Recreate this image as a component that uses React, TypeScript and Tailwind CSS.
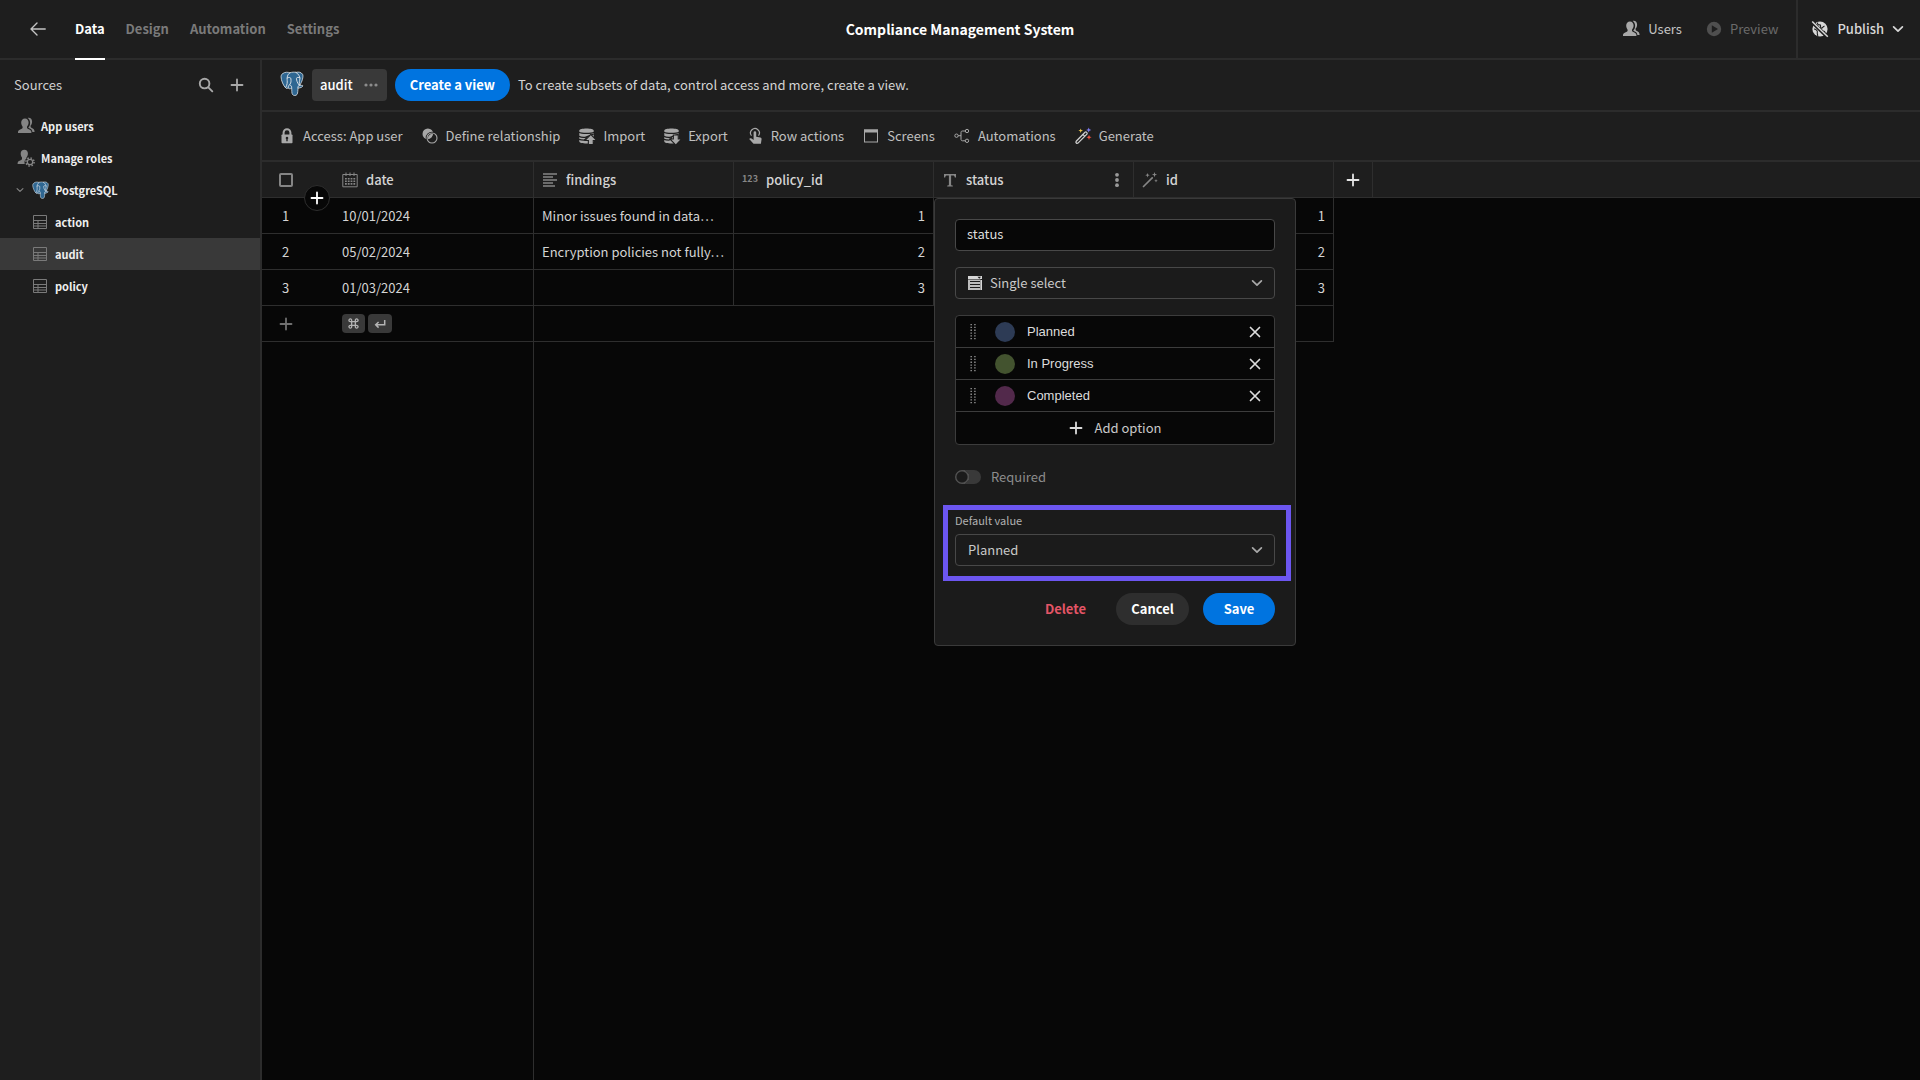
import React from "react";

type IconProps = { className?: string };
type IconType = (p: IconProps) => React.ReactElement;

const UsersIcon: IconType = ({ className = "" }) => (
  <svg viewBox="0 0 18 18" className={`size-[18px] shrink-0 ${className}`} fill="currentColor" aria-hidden="true">
    <path d="M8 1.6c2.3 0 3.6 1.7 3.6 4 0 1.700-.7 3.200-1.600 4.100v1.100c0 .5.3.8.8 1 2.400.9 3.600 1.800 3.600 3.300V16H1v-.9c0-1.500 1.300-2.400 3.800-3.300.5-.2.8-.5.8-1V9.700C4.800 8.800 4.200 7.300 4.200 5.600c0-2.300 1.400-4 3.800-4Z" />
    <path d="M10.600.9c2.600-.6 4.500 1.100 4.500 3.800 0 1.700-.7 3-1.500 3.900v1c0 .5.2.8.8 1.100 2.100.9 3.200 1.900 3.200 4.300h-2.200c-.1-2-1.300-3.100-3.600-4l-.5-.6c1.300-1.200 1.800-2.700 1.800-4.700 0-2.200-.9-3.900-2.500-4.800Z" />
  </svg>
);

const RolesIcon: IconType = ({ className = "" }) => (
  <svg viewBox="0 0 18 18" className={`size-[18px] shrink-0 ${className}`} fill="currentColor" aria-hidden="true">
    <path d="M7.400.8c2.200 0 3.500 1.600 3.500 3.800 0 1.600-.6 3-1.500 3.900v1c-1.200 1-1.900 2.300-1.900 3.800 0 .6.100 1.200.3 1.700H.6v-.8c0-1.500 1.200-2.400 3.600-3.200.6-.2.800-.5.800-1V8.500C4.200 7.600 3.700 6.200 3.700 4.600 3.700 2.400 5.100.8 7.400.8Z" />
    <circle cx="13" cy="13" r="2.700" fill="none" stroke="currentColor" strokeWidth="1.300" />
    <circle cx="13" cy="13" r="4.100" fill="none" stroke="currentColor" strokeWidth="1.500" strokeDasharray="1.500 1.720" />
  </svg>
);

const Postgres: IconType = ({ className = "" }) => (
  <svg viewBox="0 0 24 25" className={`shrink-0 ${className}`} aria-hidden="true">
    <path
      d="M2.600 2.600C5 .8 8 1 10 1.800 12 .9 14.500 1 16 1.400 18.500.6 21.300 1.200 22.600 3.300c1.200 2.200-.6 7.700-2.800 10.900 1 .5 2.800-.2 3 .4.3 1.300-2.400 2.600-4.700 2.400-.3 2.500-.2 5-1 6.400-.9 1.400-3.600 1.500-4.600.1-1-1.400-.6-4.200-.8-6.200-1.200.7-3.100.7-3.600-.3-.7.500-1.500.8-2.300.1C3.500 15 1 9.300 1 5.800c0-1.300.600-2.500 1.600-3.200Z"
      fill="#2f6792"
      stroke="#101010"
      strokeWidth="1.600"
    />
    <path
      d="M2.600 2.600C5 .8 8 1 10 1.800 12 .9 14.500 1 16 1.400 18.500.6 21.300 1.200 22.600 3.300c1.200 2.200-.6 7.700-2.800 10.900 1 .5 2.800-.2 3 .4.3 1.300-2.400 2.600-4.700 2.400-.3 2.500-.2 5-1 6.400-.9 1.400-3.600 1.500-4.600.1-1-1.400-.6-4.200-.8-6.200-1.200.7-3.100.7-3.600-.3-.7.500-1.500.8-2.300.1C3.500 15 1 9.300 1 5.800c0-1.300.600-2.500 1.600-3.200Z"
      fill="#2f6792"
      stroke="#e3e8ec"
      strokeWidth=".8"
    />
    <g fill="none" stroke="#e3e8ec" strokeWidth=".9" strokeLinecap="round" strokeLinejoin="round">
      <path d="M10 1.800C7.200 3.300 7 6.500 7.200 9.500c.1 2 .200 3.700-1.400 6.800" />
      <path d="M7.200 7c1.500-1 3.600-.7 3.700.8.200 2.200.2 4-.8 5.200-1 1.200-2 2.200-2 3.600" />
      <path d="M16 1.400c2.500 1.400 4 4.300 3.900 6.300-.1 2.100-1.400 3.700-.1 6.500" />
      <path d="M19.900 6.800c-1.400-.7-3.300-.5-3.400.5-.1 2.300 1 4.500 2.200 6.300" />
      <path d="M11.700 17c0-1.500-.4-2.500-1.500-3" />
      <path d="M17.900 17c-.3-1.500.2-2.300 1.900-2.800" />
    </g>
  </svg>
);

const TableIcon: IconType = ({ className = "" }) => (
  <svg viewBox="0 0 16 16" className={`size-4 shrink-0 ${className}`} fill="none" stroke="currentColor" aria-hidden="true">
    <path d="M1.500 1.500h13v13h-13zM1.500 6.500h13M1.500 9.500h13M1.500 12h13M6 6.500v8" />
  </svg>
);

const Chevron: IconType = ({ className = "" }) => (
  <svg viewBox="0 0 12 12" className={`shrink-0 ${className}`} fill="none" stroke="currentColor" strokeWidth="1.700" strokeLinecap="round" strokeLinejoin="round" aria-hidden="true">
    <path d="M1.600 3.800 6 8.200l4.400-4.400" />
  </svg>
);

const Plus: IconType = ({ className = "" }) => (
  <svg viewBox="0 0 14 14" className={`size-[14px] shrink-0 ${className}`} fill="none" stroke="currentColor" strokeWidth="1.800" strokeLinecap="round" aria-hidden="true">
    <path d="M7 1.500v11M1.500 7h11" />
  </svg>
);

const Search: IconType = ({ className = "" }) => (
  <svg viewBox="0 0 16 16" className={`size-4 shrink-0 ${className}`} fill="none" stroke="currentColor" strokeWidth="1.900" strokeLinecap="round" aria-hidden="true">
    <circle cx="6.600" cy="6.600" r="4.800" />
    <path d="m10.300 10.300 4 4" />
  </svg>
);

const BackArrow: IconType = ({ className = "" }) => (
  <svg viewBox="0 0 16 16" className={`size-4 shrink-0 ${className}`} fill="none" stroke="currentColor" strokeWidth="1.400" strokeLinecap="round" strokeLinejoin="round" aria-hidden="true">
    <path d="M15.200 8H1.200M7 2 1 8l6 6" />
  </svg>
);

const Play: IconType = ({ className = "" }) => (
  <svg viewBox="0 0 16 16" className={`size-4 shrink-0 ${className}`} aria-hidden="true">
    <circle cx="8" cy="8" r="7.200" fill="currentColor" />
    <path d="M5.800 4.200v7.600L12 8Z" fill="#1e1e1e" />
  </svg>
);

const GlobeOff: IconType = ({ className = "" }) => (
  <svg viewBox="0 0 18 18" className={`size-[18px] shrink-0 ${className}`} aria-hidden="true">
    <circle cx="9" cy="9" r="7.600" fill="currentColor" />
    <path d="M6.800 2.500c-1 2 .8 2.600 2.400 2.300 1 .9-.3 2.200.8 3.200 1.500 1 1.800-2 3.600-1.700M3 9c1.800 0 3.800 1.700 3.300 3.300-.3 1.300.5 2.500.4 3.700M12.500 11c1.300.2 1.800 1.500 1.300 3" fill="none" stroke="#1e1e1e" strokeWidth="1.100" />
    <path d="m1 2 15.500 15" stroke="#1e1e1e" strokeWidth="3.600" />
    <path d="m1.200 1.500 15.600 15.300" stroke="currentColor" strokeWidth="1.500" />
  </svg>
);

const Lock: IconType = ({ className = "" }) => (
  <svg viewBox="0 0 18 18" className={`size-[18px] shrink-0 ${className}`} aria-hidden="true">
    <path d="M5.600 8.500V5.600a3.400 3.400 0 0 1 6.800 0v2.900" fill="none" stroke="currentColor" strokeWidth="2" />
    <rect x="3.500" y="7.500" width="11" height="8.800" rx=".8" fill="currentColor" />
    <path d="M9 9.700a1.300 1.300 0 0 1 .7 2.400v2.100H8.300v-2.100A1.300 1.300 0 0 1 9 9.700Z" fill="#1e1e1e" />
  </svg>
);

const Relationship: IconType = ({ className = "" }) => (
  <svg viewBox="0 0 18 18" className={`size-[18px] shrink-0 ${className}`} aria-hidden="true">
    <circle cx="6.900" cy="6.900" r="5.400" fill="currentColor" />
    <circle cx="11" cy="11" r="5" fill="#1e1e1e" stroke="#1e1e1e" strokeWidth="2.600" />
    <circle cx="11" cy="11" r="5" fill="none" stroke="currentColor" strokeWidth="1.100" />
    <path d="M11.600 7.200a5.400 5.400 0 0 1-4.400 4.600 4.500 4.500 0 0 1 4.400-4.600Z" fill="currentColor" stroke="currentColor" />
  </svg>
);

const DataStack = ({ up }: { up: boolean }) => (
  <svg viewBox="0 0 18 18" className="size-[18px] shrink-0" fill="currentColor" aria-hidden="true">
    <path d="M1.300 3.400C1.300 2.100 4.500 1.400 8.500 1.400s7.200.7 7.200 2v11c0 1.200-3.200 2-7.200 2s-7.200-.8-7.200-2Z" />
    <path d="M1 5.200c2.500 1.500 12.500 1.500 15 0M1 9.300c2 1.300 4 1.300 6.200 1L15.800 7M1 12.300c1.500.7 3 .8 5 .8l3-2.400" fill="none" stroke="#1e1e1e" strokeWidth="1.200" />
    <path
      d={up ? "M12.800 8.300 17.400 13h-2.700v4h-3.800v-4H8.200Z" : "m12.800 17.200 4.600-4.700h-2.700v-4h-3.800v4H8.200Z"}
      stroke="#1e1e1e"
      strokeWidth="2.200"
    />
    <path d={up ? "M12.800 8.300 17.400 13h-2.700v4h-3.800v-4H8.200Z" : "m12.800 17.200 4.600-4.700h-2.700v-4h-3.800v4H8.200Z"} />
  </svg>
);
const ImportIcon: IconType = () => <DataStack up />;
const ExportIcon: IconType = () => <DataStack up={false} />;

const Tap: IconType = ({ className = "" }) => (
  <svg viewBox="0 0 18 18" className={`size-[18px] shrink-0 ${className}`} aria-hidden="true">
    <path d="M5.500 8.700A4.400 4.400 0 1 1 12.500 8.600" fill="none" stroke="currentColor" strokeWidth="1.200" />
    <path d="M7.600 5.500a1.300 1.300 0 0 1 2.600 0v4.200l4.200.8c.8.2 1.200.7 1.200 1.500l-.7 4.800H7.500L3.200 12c.5-.9 1.500-1 2.300-.4l2.100 1.300Z" fill="currentColor" />
  </svg>
);

const Screens: IconType = ({ className = "" }) => (
  <svg viewBox="0 0 18 18" className={`size-[18px] shrink-0 ${className}`} aria-hidden="true">
    <rect x="2.500" y="3" width="13" height="12" fill="none" stroke="currentColor" />
    <rect x="2" y="2.500" width="14" height="3" fill="currentColor" />
  </svg>
);

const Flow: IconType = ({ className = "" }) => (
  <svg viewBox="0 0 18 18" className={`size-[18px] shrink-0 ${className}`} fill="none" stroke="currentColor" aria-hidden="true">
    <circle cx="3.500" cy="8.700" r="1.700" />
    <circle cx="14" cy="4" r="1.700" />
    <circle cx="14" cy="13.800" r="1.700" />
    <path d="M5.200 8.700H8M12.300 4H9.500C8.500 4 8 4.500 8 5.500v6.800c0 1 .5 1.500 1.500 1.500h2.800" />
  </svg>
);

const MagicWand: IconType = ({ className = "" }) => (
  <svg viewBox="0 0 18 18" className={`size-[18px] shrink-0 ${className}`} aria-hidden="true">
    <path d="m2.200 14.300 8.800-9.100c1.200-.8 2.700.7 1.900 1.900l-8.900 9c-1.200.9-2.700-.6-1.800-1.800Z" fill="none" stroke="#cfcfcf" strokeWidth="1.300" />
    <path d="m8.800 7.300 2 2" stroke="#cfcfcf" strokeWidth="1.200" />
    <path d="M6.700 1.400 7.300 3l1.700.6-1.700.6-.6 1.700-.6-1.700-1.700-.6L6.100 3Z" fill="#f0c94a" />
    <path d="m14.700.4.700 1.900 1.900.7-1.900.7-.7 1.900-.7-1.900-1.900-.7 1.900-.7Z" fill="#7f7cf0" />
    <path d="m15 7.700.7 1.900 1.900.7-1.900.7L15 12.900l-.7-1.900-1.900-.7 1.900-.7Z" fill="#f0523f" />
  </svg>
);

const CalendarIcon: IconType = () => (
  <svg viewBox="0 0 16 16" className="size-4 shrink-0" fill="none" stroke="currentColor" aria-hidden="true">
    <path d="M.8 2.500h14.400v12.300H.8zM4 .5v3.500M8 .5v3.500M12 .5v3.500" />
    <path d="M3 6.700h10.500M3 9.300h10.500M3 11.900h10.500" strokeWidth="1.600" strokeDasharray="1.800 1" />
  </svg>
);

const LinesIcon: IconType = () => (
  <svg viewBox="0 0 16 16" className="size-4 shrink-0" fill="none" stroke="currentColor" strokeWidth="1.300" aria-hidden="true">
    <path d="M1 2h14M1 5h10M1 8h14M1 11h10M1 14h12" />
  </svg>
);

const NumberIcon: IconType = () => <span aria-hidden="true" className="-mt-px w-4 text-center text-[9px] font-bold leading-4">123</span>;

const TextIcon: IconType = () => (
  <svg viewBox="0 0 16 16" className="size-4 shrink-0" fill="currentColor" aria-hidden="true">
    <path d="M2 2h12v3.500h-1.200C12.600 4 12 3.600 11 3.600H9.100v9c0 .7.400.9 1.700 1v1H5.200v-1c1.300-.1 1.700-.3 1.700-1v-9H5c-1 0-1.600.4-1.800 1.900H2Z" />
  </svg>
);

const WandSmall: IconType = () => (
  <svg viewBox="0 0 16 16" className="size-4 shrink-0" aria-hidden="true">
    <path d="m1.500 14.500 8.700-8.700" stroke="currentColor" strokeWidth="1.700" strokeLinecap="round" />
    <path d="m5.500 1 .6 1.600 1.600.6-1.600.6-.6 1.600-.6-1.600-1.600-.6 1.600-.6ZM12.500 0l.7 1.900 1.900.7-1.900.7-.7 1.900-.7-1.900-1.900-.7 1.900-.7ZM14 7l.5 1.200 1.200.5-1.200.5L14 10.400l-.5-1.200-1.200-.5 1.200-.5Z" fill="currentColor" />
  </svg>
);

const SelectIcon: IconType = ({ className = "" }) => (
  <svg viewBox="0 0 16 16" className={`size-4 ${className}`} aria-hidden="true">
    <path d="M1 1h14v3H1z" fill="#d6d6d6" />
    <path d="M10.500 1.700h3.500l-1.700 2Z" fill="#1b1b1b" />
    <path d="M1 4.500h12.500V15H1z" fill="#bdbdbd" />
    <path d="M13.500 5H15v10h-1.500z" fill="#d6d6d6" />
    <path d="M3 6.500h10M3 9.500h10M3 12.500h10" stroke="#1b1b1b" />
  </svg>
);

const Grip: IconType = () => (
  <svg viewBox="0 0 6 16" className="h-4 w-[6px] shrink-0" stroke="#8c8c8c" strokeWidth="1.500" strokeDasharray="1.300 1.500" aria-hidden="true">
    <path d="M1.200 0v16M4.900 0v16" />
  </svg>
);

const Cross: IconType = () => (
  <svg viewBox="0 0 12 12" className="size-3" fill="none" stroke="currentColor" strokeWidth="1.700" strokeLinecap="round" aria-hidden="true">
    <path d="m1.500 1.500 9 9M10.500 1.500l-9 9" />
  </svg>
);

const tabs = ["Data", "Design", "Automation", "Settings"];

const tools: { label: string; Icon: IconType }[] = [
  { label: "Access: App user", Icon: Lock },
  { label: "Define relationship", Icon: Relationship },
  { label: "Import", Icon: ImportIcon },
  { label: "Export", Icon: ExportIcon },
  { label: "Row actions", Icon: Tap },
  { label: "Screens", Icon: Screens },
  { label: "Automations", Icon: Flow },
  { label: "Generate", Icon: MagicWand },
];

const rows = [
  { date: "10/01/2024", findings: "Minor issues found in data…", policy: 1, id: 1 },
  { date: "05/02/2024", findings: "Encryption policies not fully…", policy: 2, id: 2 },
  { date: "01/03/2024", findings: "", policy: 3, id: 3 },
];

const options = [
  { name: "Planned", color: "bg-[#2d3b55]" },
  { name: "In Progress", color: "bg-[#43532f]" },
  { name: "Completed", color: "bg-[#52294b]" },
];

function TopBar() {
  return (
    <header className="grid h-[60px] shrink-0 grid-cols-[1fr_auto_1fr] border-b-2 border-[#2c2c2c]">
      <div className="flex items-center pl-[30px]">
        <button aria-label="Back" className="mr-[29px] text-[#c4c4c4]"><BackArrow /></button>
        <nav className="-mb-[2px] flex gap-[21px] self-stretch">
          {tabs.map((t, i) => (
            <a
              key={t}
              href="#"
              className={`flex items-center border-b-2 text-[13px] font-bold ${i === 0 ? "border-white text-white" : "border-transparent text-[#7a7a7a]"}`}
            >
              {t}
            </a>
          ))}
        </nav>
      </div>
      <h1 className="self-center text-[14px] font-bold text-white">Compliance Management System</h1>
      <div className="flex items-center justify-end text-[13px]">
        <button className="mr-6 flex items-center gap-2 text-[#c4c4c4]"><UsersIcon className="text-[#a8a8a8]" />Users</button>
        <button className="mr-[18px] flex items-center gap-2 text-[#6a6a6a]"><Play className="text-[#4f4f4f]" />Preview</button>
        <button className="flex items-center gap-2 self-stretch border-l-2 border-[#2c2c2c] pl-[13px] pr-4 font-medium text-[#d8d8d8]">
          <GlobeOff />Publish<Chevron className="size-3" />
        </button>
      </div>
    </header>
  );
}

function Sidebar() {
  return (
    <aside className="w-[262px] shrink-0 border-r-2 border-[#2c2c2c] text-[11px] font-bold text-[#efefef]">
      <div className="flex h-[50px] items-center pl-[14px] pr-4">
        <h2 className="flex-1 text-[13px] font-normal text-[#d0d0d0]">Sources</h2>
        <button aria-label="Search" className="mr-4 text-[#a8a8a8]"><Search /></button>
        <button aria-label="Add source" className="text-[#a8a8a8]"><Plus /></button>
      </div>
      <nav>
        <a href="#" className="flex h-8 items-center gap-[6px] pl-[17px]"><UsersIcon className="text-[#858585]" />App users</a>
        <a href="#" className="flex h-8 items-center gap-[6px] pl-[17px]"><RolesIcon className="text-[#858585]" />Manage roles</a>
        <a href="#" className="flex h-8 items-center pl-4">
          <Chevron className="mr-2 size-2 text-[#858585]" />
          <Postgres className="mr-[6px] h-[18px] w-[17px]" />
          PostgreSQL
        </a>
        {["action", "audit", "policy"].map((t) => (
          <a key={t} href="#" className={`flex h-8 items-center gap-[7px] pl-8 ${t === "audit" ? "bg-[#393939]" : ""}`}>
            <TableIcon className="text-[#7a7a7a]" />{t}
          </a>
        ))}
      </nav>
    </aside>
  );
}

const headCell = "h-9 border-b border-r border-[#2e2e2e] bg-[#1e1e1e] p-0 px-2 text-left font-medium";

function ColumnHead({ Icon, name, menu }: { Icon: IconType; name: string; menu?: boolean }) {
  return (
    <th className={headCell}>
      <div className="flex items-center gap-2">
        <span className="flex text-[#868686]"><Icon /></span>
        <span className="flex-1">{name}</span>
        {menu && (
          <button aria-label="Column menu" className="text-[#9a9a9a]">
            <svg viewBox="0 0 16 16" className="size-4" fill="currentColor" aria-hidden="true">
              <circle cx="8" cy="2.800" r="1.900" /><circle cx="8" cy="8" r="1.900" /><circle cx="8" cy="13.200" r="1.900" />
            </svg>
          </button>
        )}
      </div>
    </th>
  );
}

const cell = "h-9 border-b border-r border-[#2e2e2e] px-2 py-0 whitespace-nowrap";

function Grid() {
  return (
    <table className="w-full table-fixed border-separate border-spacing-0 text-[13px] text-[#d4d4d4]">
      <colgroup>
        <col className="w-[72px]" />
        <col className="w-[200px]" />
        <col className="w-[200px]" />
        <col className="w-[200px]" />
        <col className="w-[200px]" />
        <col className="w-[200px]" />
        <col className="w-[39px]" />
        <col />
      </colgroup>
      <thead>
        <tr>
          <th className="relative h-9 border-b border-[#2e2e2e] bg-[#1e1e1e] p-0">
            <input type="checkbox" aria-label="Select all rows" className="ml-[17px] block size-[14px] appearance-none rounded-[2px] border-2 border-[#858585]" />
            <button aria-label="Insert row" className="absolute -bottom-[14px] right-1 z-10 flex size-[26px] items-center justify-center rounded-full border border-[#2e2e2e] bg-[#070707] text-white">
              <Plus className="size-3" />
            </button>
          </th>
          <ColumnHead Icon={CalendarIcon} name="date" />
          <ColumnHead Icon={LinesIcon} name="findings" />
          <ColumnHead Icon={NumberIcon} name="policy_id" />
          <ColumnHead Icon={TextIcon} name="status" menu />
          <ColumnHead Icon={WandSmall} name="id" />
          <th className={headCell}>
            <button aria-label="Add column" className="mx-auto block text-[#e6e6e6]"><Plus /></button>
          </th>
          <th className="border-b border-[#2e2e2e] bg-[#1e1e1e]" />
        </tr>
      </thead>
      <tbody>
        {rows.map((r, i) => (
          <tr key={r.date}>
            <td className="h-9 border-b border-[#2e2e2e] p-0"><div className="w-[47px] text-center">{i + 1}</div></td>
            <td className={cell}>{r.date}</td>
            <td className={cell}>{r.findings}</td>
            <td className={`${cell} text-right`}>{r.policy}</td>
            <td className={cell} />
            <td className={`${cell} text-right`}>{r.id}</td>
          </tr>
        ))}
        <tr>
          <td className="h-9 border-b border-[#2e2e2e] p-0">
            <button aria-label="Add row" className="ml-[17px] block text-[#707070]"><Plus /></button>
          </td>
          <td className={cell}>
            <div className="flex gap-[3px] text-[#b4b4b4]">
              <kbd className="flex h-[19px] w-[23px] items-center justify-center rounded bg-[#393939]">
                <svg viewBox="0 0 12 12" className="size-[11px]" fill="none" stroke="currentColor" strokeWidth="1.400" aria-label="Command">
                  <path d="M4 4h4v4H4zM4 4H2.700A1.500 1.500 0 1 1 4 2.700ZM8 4V2.700A1.500 1.500 0 1 1 9.300 4ZM8 8h1.300A1.500 1.500 0 1 1 8 9.300ZM4 8v1.300A1.500 1.500 0 1 1 2.700 8Z" />
                </svg>
              </kbd>
              <kbd className="flex h-[19px] w-6 items-center justify-center rounded bg-[#393939]">
                <svg viewBox="0 0 12 12" className="size-3" fill="none" stroke="currentColor" strokeWidth="1.500" aria-label="Enter">
                  <path d="M10.700 2v4.800H2M4.600 4 1.700 6.800l2.900 2.800" />
                </svg>
              </kbd>
            </div>
          </td>
          <td colSpan={4} className={cell} />
        </tr>
      </tbody>
    </table>
  );
}

function ColumnEditor() {
  return (
    <form className="absolute left-[672px] top-9 z-20 w-[362px] rounded border border-[#3a3a3a] bg-[#1b1b1b] p-5 text-[13px] text-[#c9c9c9]">
      <input aria-label="Column name" defaultValue="status" className="block h-8 w-full rounded border border-[#484848] bg-[#070707] px-[11px] pb-[3px] text-[#dcdcdc]" />
      <div className="relative mt-4">
        <SelectIcon className="pointer-events-none absolute left-3 top-2" />
        <select aria-label="Column type" className="block h-8 w-full appearance-none rounded border border-[#484848] bg-transparent pl-[34px] pr-8">
          <option>Single select</option>
        </select>
        <Chevron className="pointer-events-none absolute right-3 top-[10px] size-3 text-[#a8a8a8]" />
      </div>
      <div className="mt-4 divide-y divide-[#3c3c3c] rounded border border-[#3c3c3c] bg-[#070707]">
        {options.map((o) => (
          <div key={o.name} className="flex h-8 items-center pl-[14px] pr-[13px]">
            <Grip />
            <span className={`ml-[19px] size-5 rounded-full ${o.color}`} />
            <input aria-label={`Option ${o.name}`} defaultValue={o.name} className="ml-3 w-0 flex-1 bg-transparent pt-px font-['Liberation_Sans',sans-serif] text-[13px] text-[#dcdcdc]" />
            <button type="button" aria-label={`Remove ${o.name}`} className="text-[#dcdcdc]"><Cross /></button>
          </div>
        ))}
        <button type="button" className="flex h-8 w-full items-center justify-center gap-3">
          <Plus className="text-[#dcdcdc]" />Add option
        </button>
      </div>
      <label className="mt-5 flex h-6 items-center gap-[10px] text-[#8c8c8c]">
        <input type="checkbox" role="switch" className="h-[14px] w-[26px] appearance-none rounded-full bg-[#393939] bg-[radial-gradient(circle_at_7px_7px,#1b1b1b_5px,#505050_6px,#505050_7px,transparent_7px)]" />
        Required
      </label>
      <div className="-ml-3 -mr-4 mt-4 border-5 border-[#6c56f0] pb-[10px] pl-[7px] pr-[11px] pt-[2px]">
        <label htmlFor="default-value" className="mb-[6px] block h-4 text-[11px] leading-4 text-[#b2b2b2]">Default value</label>
        <div className="relative">
          <select id="default-value" className="block h-8 w-full appearance-none rounded border border-[#484848] bg-transparent pl-3 pr-8">
            <option>Planned</option>
          </select>
          <Chevron className="pointer-events-none absolute right-3 top-[10px] size-3 text-[#a8a8a8]" />
        </div>
      </div>
      <div className="mt-3 flex justify-end font-bold">
        <button type="button" className="mr-[30px] h-8 text-[#e45566]">Delete</button>
        <button type="button" className="mr-[14px] h-8 w-[73px] rounded-full bg-[#2e2e2e] text-white">Cancel</button>
        <button type="button" className="h-8 w-[72px] rounded-full bg-[#0074e0] text-white">Save</button>
      </div>
    </form>
  );
}

export default function App() {
  return (
    <div className="flex min-h-screen flex-col bg-[#1e1e1e] font-['Noto_Sans_CJK_SC',sans-serif]">
      <TopBar />
      <div className="flex flex-1">
        <Sidebar />
        <main className="flex min-w-0 flex-1 flex-col">
          <div className="flex h-[52px] shrink-0 items-center border-b-2 border-[#2c2c2c] pl-[18px] text-[13px]">
            <Postgres className="mb-1 mr-2 h-[25px] w-6" />
            <button className="mr-2 flex h-8 items-center gap-[10px] rounded bg-[#393939] px-2 font-medium text-white">
              audit
              <svg viewBox="0 0 16 16" className="size-4 text-[#8c8c8c]" fill="currentColor" aria-hidden="true">
                <circle cx="3" cy="8" r="1.600" /><circle cx="8" cy="8" r="1.600" /><circle cx="13" cy="8" r="1.600" />
              </svg>
            </button>
            <button className="mr-2 h-8 rounded-full bg-[#0074e0] px-[15px] font-bold text-white">Create a view</button>
            <p className="text-[#d4d4d4]">To create subsets of data, control access and more, create a view.</p>
          </div>
          <div className="flex h-[50px] shrink-0 items-center gap-[18px] border-b-2 border-[#2c2c2c] pl-4 text-[13px] text-[#c0c0c0]">
            {tools.map(({ label, Icon }) => (
              <button key={label} className="flex items-center gap-[7px] whitespace-nowrap">
                <span className="flex text-[#a8a8a8]"><Icon /></span>{label}
              </button>
            ))}
          </div>
          <div className="relative flex flex-1 flex-col bg-[#070707]">
            <Grid />
            <div className="w-[272px] flex-1 border-r border-[#2e2e2e]" />
            <ColumnEditor />
          </div>
        </main>
      </div>
    </div>
  );
}
